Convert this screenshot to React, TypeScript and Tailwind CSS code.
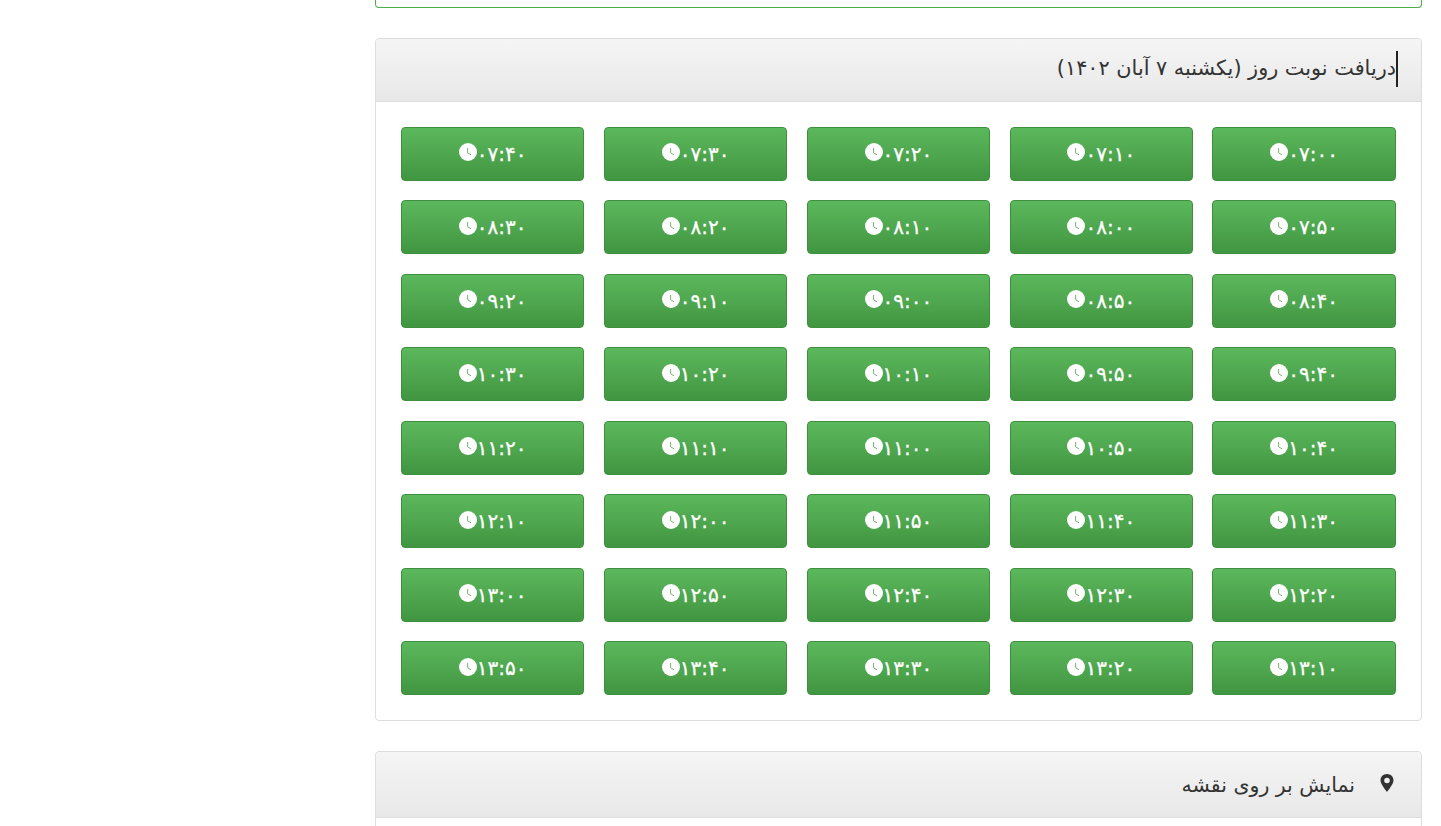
const times = [
  "۰۷:۰۰", "۰۷:۱۰", "۰۷:۲۰", "۰۷:۳۰", "۰۷:۴۰",
  "۰۷:۵۰", "۰۸:۰۰", "۰۸:۱۰", "۰۸:۲۰", "۰۸:۳۰",
  "۰۸:۴۰", "۰۸:۵۰", "۰۹:۰۰", "۰۹:۱۰", "۰۹:۲۰",
  "۰۹:۴۰", "۰۹:۵۰", "۱۰:۱۰", "۱۰:۲۰", "۱۰:۳۰",
  "۱۰:۴۰", "۱۰:۵۰", "۱۱:۰۰", "۱۱:۱۰", "۱۱:۲۰",
  "۱۱:۳۰", "۱۱:۴۰", "۱۱:۵۰", "۱۲:۰۰", "۱۲:۱۰",
  "۱۲:۲۰", "۱۲:۳۰", "۱۲:۴۰", "۱۲:۵۰", "۱۳:۰۰",
  "۱۳:۱۰", "۱۳:۲۰", "۱۳:۳۰", "۱۳:۴۰", "۱۳:۵۰",
];

function ClockIcon() {
  return (
    <svg viewBox="0 0 18 18" className="w-[18px] h-[18px] shrink-0 -mt-[3px]">
      <circle cx="9" cy="9" r="9" fill="#fff" />
      <path d="M8.600 5 V9.800 L12 11.800" fill="none" stroke="#7fae78" strokeWidth="1" />
    </svg>
  );
}

function PinIcon() {
  return (
    <svg viewBox="0 0 14 18" className="w-[14px] h-[18px] shrink-0 -mt-[3px]">
      <path
        fillRule="evenodd"
        fill="#333"
        d="M7 0C3.2 0 .5 2.8.5 6.3.5 10 4.8 15 7 18c2.2-3 6.5-8 6.5-11.7C13.500 2.800 10.800 0 7 0Zm0 3.700a2.800 2.800 0 1 1 0 5.600 2.800 2.800 0 0 1 0-5.600Z"
      />
    </svg>
  );
}

export default function App() {
  return (
    <div dir="rtl" className="h-[826px] overflow-hidden bg-white font-['DejaVu_Sans',sans-serif] text-[#333]">
      <div className="ml-[375px] mr-[19px]">
        {/* top panel, scrolled off */}
        <div className="h-[8px] border border-t-0 border-[#4cae4c] rounded-b-[4px] mb-[30px]" />

        {/* time slots */}
        <div className="border border-[#ddd] rounded-[4px] mb-[30px]">
          <div className="h-[63px] flex items-center pr-[23px] bg-gradient-to-b from-[#f5f5f5] to-[#e8e8e8] border-b border-[#ddd] rounded-t-[4px]">
            <span className="inline-block w-[2px] h-[36px] -mt-[2px] bg-[#222]" />
            <h3 className="text-[20.8px] font-normal leading-none -mt-[4px]">دریافت نوبت روز (یکشنبه ۷ آبان ۱۴۰۲)</h3>
          </div>
          <div className="pl-[24.85px] pr-[25px] pt-[24.9px] pb-[25px] grid grid-cols-5 gap-x-[19.35px] gap-y-[19.5px]">
            {times.map((t) => (
              <button
                key={t}
                className="h-[54px] flex items-center justify-center rounded-[4px] border border-[#3e8f3e] bg-gradient-to-b from-[#5cb85c] to-[#419641] text-white text-[20px] [-webkit-text-stroke:0.3px_white]"
                dir="ltr"
              >
                <ClockIcon />
                <span>{t}</span>
              </button>
            ))}
          </div>
        </div>

        {/* map panel */}
        <div className="border border-[#ddd] rounded-[4px]">
          <div className="h-[66px] flex items-center pr-[27px] gap-[25px] bg-gradient-to-b from-[#f5f5f5] to-[#e8e8e8] border-b border-[#ddd] rounded-t-[4px]">
            <PinIcon />
            <h3 className="text-[20.5px] font-normal leading-none">نمایش بر روی نقشه</h3>
          </div>
          <div className="h-[100px]" />
        </div>
      </div>
    </div>
  );
}
